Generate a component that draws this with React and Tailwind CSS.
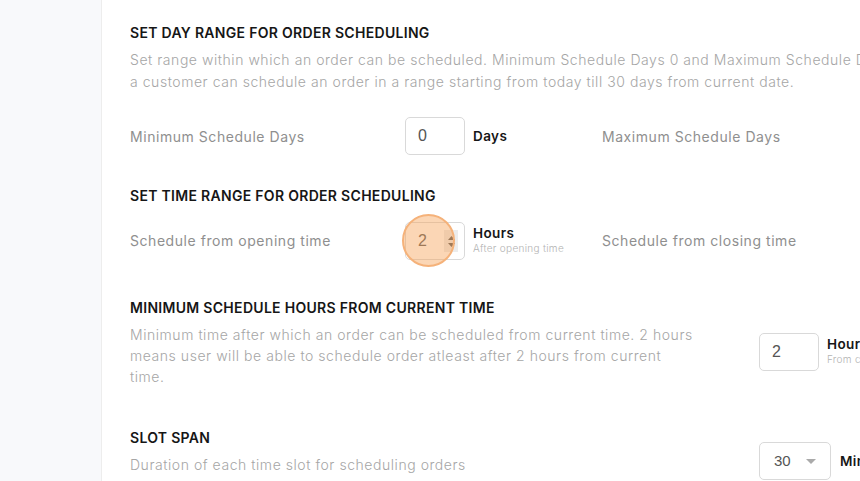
import React from "react";

const font = { fontFamily: "Inter, 'Noto Sans', sans-serif" };

function Heading({ children, className = "" }) {
  return (
    <h2 className={`text-[14px] leading-[20px] font-semibold text-[#161616] uppercase tracking-[0.3px] ${className}`}>
      {children}
    </h2>
  );
}

function Unit({ title, sub }) {
  return (
    <div className="flex flex-col">
      <span className="text-[13.5px] leading-[16px] font-semibold text-[#161616] tracking-[0.4px]">{title}</span>
      {sub && <span className="text-[10px] leading-[12px] mt-[1px] text-[#b3b3b3] font-light whitespace-nowrap tracking-[0.3px]">{sub}</span>}
    </div>
  );
}

function NumBox({ value, w = "w-[60px]" }) {
  return (
    <div className={`${w} h-[38px] shrink-0 rounded-[5px] border border-[#d9d9d9] bg-white flex items-center pl-[12px] text-[16px] text-[#555] [font-family:'Liberation_Sans',Arial,sans-serif]`}>
      {value}
    </div>
  );
}

const label = "text-[14px] text-[#8f8f8f] tracking-[0.55px]";
const desc = "text-[14px] text-[#a6a6a6] font-light tracking-[0.55px]";

export default function App() {
  return (
    <div className="flex h-[481px] w-[860px] overflow-hidden bg-white" style={font}>
      <aside className="w-[102px] shrink-0 bg-[#f8f9fb] border-r border-[#ededed]" />
      <main className="flex-1 pl-[28px] pt-[23px] overflow-hidden whitespace-nowrap">
        <Heading>Set day range for order scheduling</Heading>
        <p className={`mt-[6px] leading-[22px] ${desc}`}>
          Set range within which an order can be scheduled. Minimum Schedule Days 0 and Maximum Schedule Days 30 means
          <br />
          a customer can schedule an order in a range starting from today till 30 days from current date.
        </p>

        <div className="mt-[24px] grid grid-cols-[275px_197px_1fr] items-center">
          <span className={label}>Minimum Schedule Days</span>
          <div className="flex items-center gap-[8px]">
            <NumBox value="0" />
            <Unit title="Days" />
          </div>
          <span className={label}>Maximum Schedule Days</span>
        </div>

        <Heading className="mt-[31px]">Set time range for order scheduling</Heading>

        <div className="mt-[16px] grid grid-cols-[275px_197px_1fr] items-center">
          <span className={`${label} mb-[1px]`}>Schedule from opening time</span>
          <div className="flex items-center gap-[8px]">
            <div className="relative">
              <div className="w-[60px] h-[38px] rounded-[5px] border border-[#d9d9d9] bg-white flex items-center pl-[12px] text-[16px] text-[#555] [font-family:'Liberation_Sans',Arial,sans-serif]">
                2
                <span className="ml-auto mr-[6px] h-[22px] w-[14px] bg-[#ececec] flex flex-col items-center justify-center gap-[3px]">
                  <svg width="7" height="4" viewBox="0 0 7 4"><path d="M0 4L3.5 0L7 4Z" fill="#555" /></svg>
                  <svg width="7" height="4" viewBox="0 0 7 4"><path d="M0 0L3.5 4L7 0Z" fill="#555" /></svg>
                </span>
              </div>
              <div className="absolute left-[-3px] top-[-8px] w-[53px] h-[53px] rounded-full bg-[#f7a35c]/45 border-2 border-[#f5b27a]" />
            </div>
            <div className="mb-[4px]">
              <Unit title="Hours" sub="After opening time" />
            </div>
          </div>
          <span className={`${label} mb-[1px]`}>Schedule from closing time</span>
        </div>

        <div className="mt-[38px] flex items-center">
          <div className="w-[629px] shrink-0 pr-[62px]">
            <Heading>Minimum schedule hours from current time</Heading>
            <p className={`mt-[6px] leading-[21px] whitespace-normal ${desc}`}>
              Minimum time after which an order can be scheduled from current time. 2 hours means user will be able to schedule order atleast after 2 hours from current time.
            </p>
          </div>
          <div className="mt-[18px] flex items-center gap-[8px]">
            <NumBox value="2" />
            <div className="mb-[2px]">
              <Unit title="Hours" sub="From current time" />
            </div>
          </div>
        </div>

        <div className="mt-[37px] flex items-center">
          <div className="w-[629px] shrink-0">
            <Heading>Slot span</Heading>
            <p className={`mt-[6px] leading-[22px] ${desc}`}>
              Duration of each time slot for scheduling orders
            </p>
          </div>
          <div className="mt-[18px] flex items-center gap-[9px]">
            <div className="w-[72px] h-[38px] shrink-0 rounded-[5px] border border-[#d9d9d9] bg-white flex items-center pl-[14px] pr-[14px] text-[15px] text-[#555] [font-family:'Liberation_Sans',Arial,sans-serif]">
              30
              <svg className="ml-auto" width="10" height="5" viewBox="0 0 10 5"><path d="M0 0L5 5L10 0Z" fill="#aaa" /></svg>
            </div>
            <Unit title="Minutes" />
          </div>
        </div>
      </main>
    </div>
  );
}
